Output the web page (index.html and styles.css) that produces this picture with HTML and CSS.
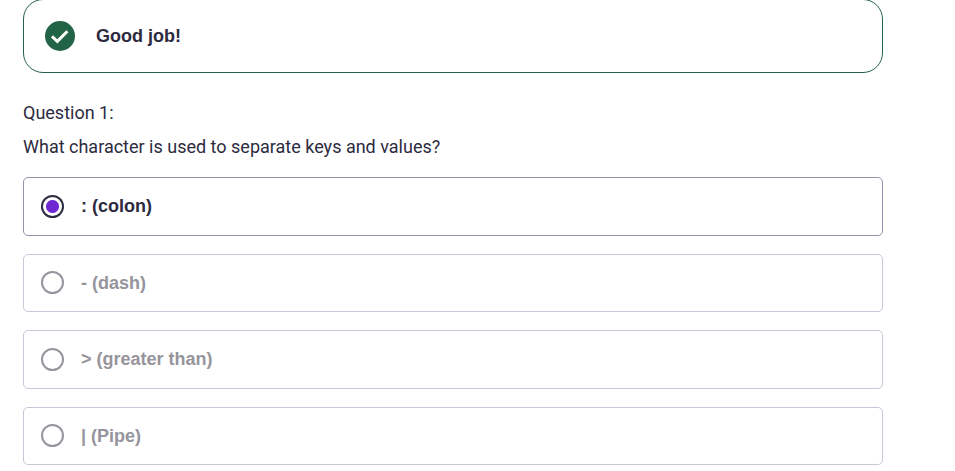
FILE: index.html
```html
<!DOCTYPE html>
<html lang="en">
<head>
<meta charset="utf-8">
<title>Quiz</title>
<link rel="stylesheet" href="styles.css">
</head>
<body>
<main class="quiz">
  <div class="banner" role="status">
    <svg class="banner-icon" viewBox="0 0 30 30" aria-hidden="true">
      <circle cx="15" cy="15" r="15" fill="#236446"/>
      <path d="M7 15.4 12.3 20.3 22.4 10.2" fill="none" stroke="#fff" stroke-width="3"/>
    </svg>
    <strong>Good job!</strong>
  </div>
  <form class="question">
    <p class="text">Question 1:</p>
    <p class="text" id="prompt">What character is used to separate keys and values?</p>
    <div class="options" role="radiogroup" aria-labelledby="prompt">
      <label class="option"><input class="radio" type="radio" name="answer" checked><span>: (colon)</span></label>
      <label class="option"><input class="radio" type="radio" name="answer"><span>- (dash)</span></label>
      <label class="option"><input class="radio" type="radio" name="answer"><span>&gt; (greater than)</span></label>
      <label class="option"><input class="radio" type="radio" name="answer"><span>| (Pipe)</span></label>
    </div>
  </form>
</main>
</body>
</html>
```
FILE: styles.css
```css
* {
  box-sizing: border-box;
}

body {
  margin: 0;
  background: #fff;
  color: #2d2b3f;
  font: 18px/24px Roboto, "Liberation Sans", sans-serif;
}

.quiz {
  margin: -1px 72px 0 23px;
}

.banner,
.option {
  font-family: "Liberation Sans", Arial, sans-serif;
  font-weight: 700;
}

.banner {
  display: flex;
  align-items: center;
  gap: 21px;
  min-height: 74px;
  padding: 0 21px;
  border: 1px solid #236446;
  border-radius: 20px;
}

.banner-icon {
  width: 30px;
  height: 30px;
}

.question {
  margin-top: 28px;
}

.text {
  margin: 0 0 10px;
}

.options {
  display: grid;
  grid-auto-rows: 1fr;
  gap: 18px;
  min-height: 288px;
  margin-top: 18px;
}

.option {
  display: flex;
  align-items: center;
  gap: 17px;
  padding: 0 17px;
  border: 1px solid #c9c7d6;
  border-radius: 5px;
  color: #96949c;
}

.option:has(:checked) {
  border-color: #9491ad;
  color: #2d2b3f;
}

.radio {
  appearance: none;
  width: 23px;
  height: 23px;
  margin: 0;
  border: 2px solid #96949c;
  border-radius: 50%;
}

.radio:checked {
  border-color: #2d2b3f;
  background: radial-gradient(circle, #6e29d2 6px, #fff 7px);
}
```
